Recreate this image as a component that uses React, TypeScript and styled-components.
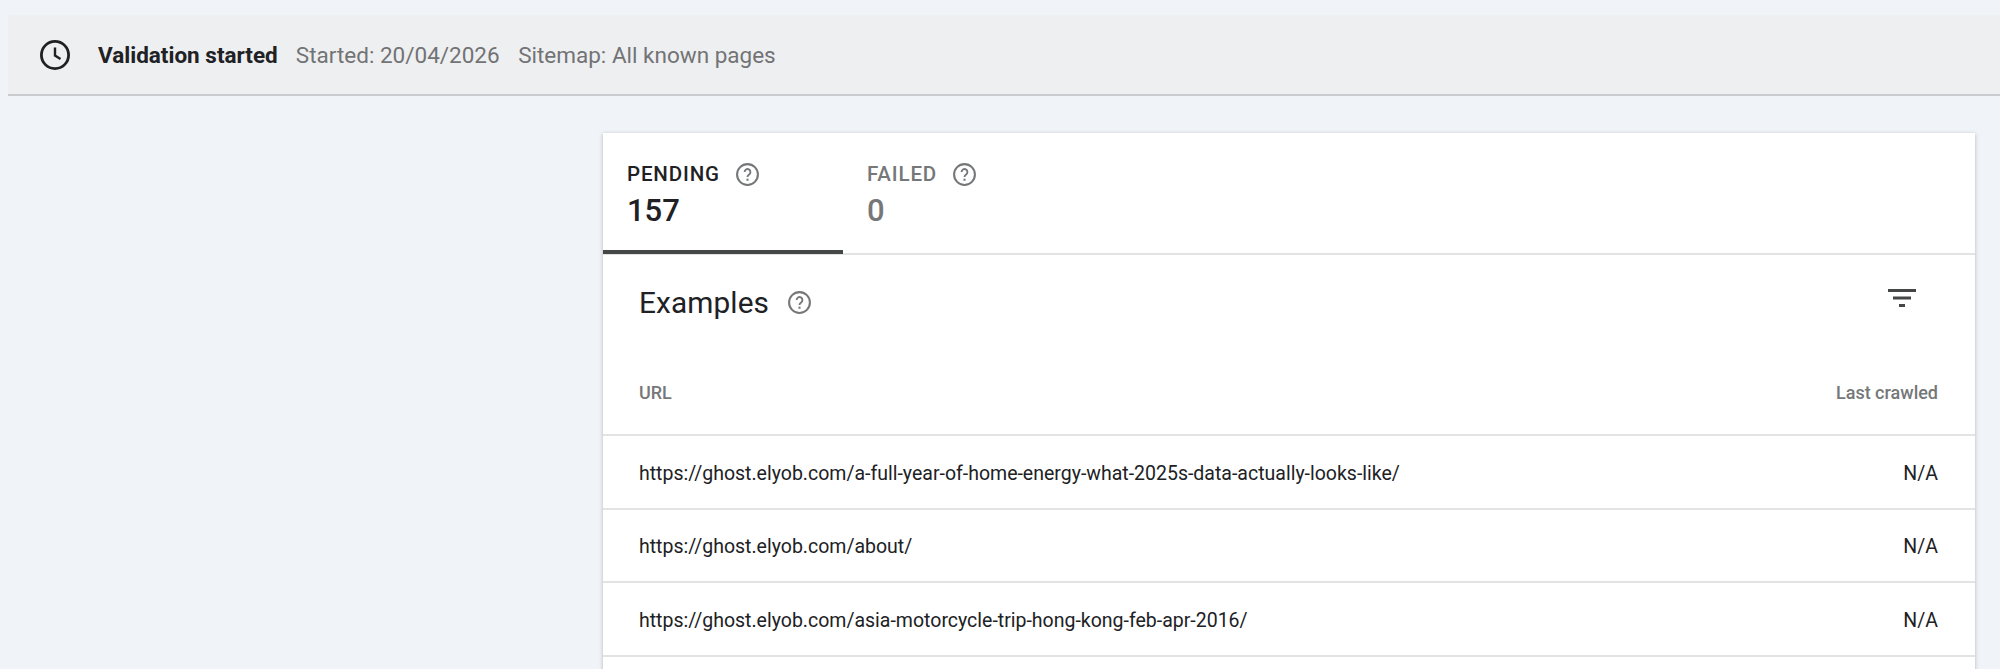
import styled, { createGlobalStyle } from "styled-components";

const GlobalStyle = createGlobalStyle`
  html, body {
    margin: 0;
    padding: 0;
    height: 669px;
    overflow: hidden;
    background: #f0f4f9;
    font-family: Roboto, "Liberation Sans", sans-serif;
    color: #202124;
  }
`;

const Page = styled.div`
  display: flex;
  flex-direction: column;
  box-sizing: border-box;
  height: 669px;
  overflow: hidden;
  padding: 15px 0 0 8px;
`;

const Banner = styled.div`
  display: flex;
  flex: none;
  align-items: center;
  height: 78px;
  padding: 1px 0 0 31px;
  background: #eeeff1;
  border-bottom: 2px solid #c9cbce;
  font-size: 22.5px;
`;

const BannerIcon = styled.svg`
  width: 32px;
  height: 32px;
  margin-right: 27px;
`;

const BannerTitle = styled.span`
  font-weight: 700;
  margin-right: 18px;
`;

const BannerMeta = styled.span`
  color: #727375;
  margin-right: 18.5px;
`;

const Layout = styled.div`
  display: flex;
  flex: 1;
  min-height: 0;
  overflow: hidden;
  justify-content: flex-end;
  padding: 37px 25px 0 0;
`;

const Card = styled.div`
  flex: none;
  width: 1372px;
  height: 600px;
  background: #fff;
  box-shadow: 0 1px 4px rgba(60, 64, 67, 0.35);
`;

const Tabs = styled.div`
  display: flex;
  box-sizing: border-box;
  height: 122px;
  border-bottom: 2px solid #e3e3e3;
`;

const Tab = styled.div<{ $active?: boolean }>`
  box-sizing: border-box;
  width: 240px;
  height: 121px;
  padding: 28px 24px 0;
  color: ${(p) => (p.$active ? "#202124" : "#757779")};
  border-bottom: 4px solid ${(p) => (p.$active ? "#444746" : "transparent")};
`;

const TabLabel = styled.div`
  display: flex;
  align-items: center;
  gap: 15px;
  height: 26px;
  font-size: 20.5px;
  font-weight: 500;
  letter-spacing: 0.85px;
`;

const TabValue = styled.div`
  font-size: 31px;
  font-weight: 500;
  line-height: 36px;
  margin-top: 6px;
`;

const HelpIcon = styled.svg`
  width: 25px;
  height: 25px;
  flex: none;
`;

const ExamplesHeader = styled.div`
  display: flex;
  align-items: center;
  justify-content: space-between;
  height: 94px;
  padding: 0 58px 0 36px;
`;

const ExamplesTitle = styled.div`
  display: flex;
  align-items: center;
  gap: 18px;
  font-size: 29.8px;
  letter-spacing: 0.1px;
`;

const FilterIcon = styled.svg`
  width: 30px;
  height: 24px;
  margin-bottom: 8px;
`;

const Row = styled.div<{ $head?: boolean }>`
  display: flex;
  align-items: center;
  justify-content: space-between;
  box-sizing: border-box;
  height: ${(p) => (p.$head ? "87px" : "73.6px")};
  padding: ${(p) => (p.$head ? "2px 37px 0 36px" : "3px 37px 0 36px")};
  border-bottom: 2px solid #e3e3e3;
  font-size: ${(p) => (p.$head ? "18px" : "19.5px")};
  font-weight: ${(p) => (p.$head ? 500 : 400)};
  color: ${(p) => (p.$head ? "#757779" : "#202124")};
`;

const rows = [
  "https://ghost.elyob.com/a-full-year-of-home-energy-what-2025s-data-actually-looks-like/",
  "https://ghost.elyob.com/about/",
  "https://ghost.elyob.com/asia-motorcycle-trip-hong-kong-feb-apr-2016/",
];

function Help() {
  return (
    <HelpIcon viewBox="0 0 24 24" fill="none">
      <circle cx="12" cy="12" r="10" stroke="#757779" strokeWidth="2" />
      <path
        d="M9.2 9.6a2.8 2.8 0 1 1 4.4 2.3c-1 .7-1.6 1.2-1.6 2.4"
        stroke="#757779"
        strokeWidth="1.8"
      />
      <rect x="11" y="16" width="2" height="2" fill="#757779" />
    </HelpIcon>
  );
}

export default function App() {
  return (
    <>
      <GlobalStyle />
      <Page>
        <Banner>
          <BannerIcon viewBox="0 0 32 32" fill="none">
            <circle cx="16" cy="16" r="13.6" stroke="#202124" strokeWidth="2.8" />
            <path d="M16 8.5V16.5L21.5 20" stroke="#202124" strokeWidth="2.4" />
          </BannerIcon>
          <BannerTitle>Validation started</BannerTitle>
          <BannerMeta>Started: 20/04/2026</BannerMeta>
          <BannerMeta>Sitemap: All known pages</BannerMeta>
        </Banner>
        <Layout>
          <Card>
            <Tabs>
              <Tab $active>
                <TabLabel>
                  PENDING
                  <Help />
                </TabLabel>
                <TabValue>157</TabValue>
              </Tab>
              <Tab>
                <TabLabel>
                  FAILED
                  <Help />
                </TabLabel>
                <TabValue>0</TabValue>
              </Tab>
            </Tabs>
            <ExamplesHeader>
              <ExamplesTitle>
                Examples
                <Help />
              </ExamplesTitle>
              <FilterIcon viewBox="0 0 30 24" fill="#444746">
                <rect x="1" y="3" width="28" height="3" />
                <rect x="6" y="10.5" width="18" height="3" />
                <rect x="12" y="18" width="6" height="3" />
              </FilterIcon>
            </ExamplesHeader>
            <Row $head>
              <span>URL</span>
              <span>Last crawled</span>
            </Row>
            {rows.map((url) => (
              <Row key={url}>
                <span>{url}</span>
                <span>N/A</span>
              </Row>
            ))}
          </Card>
        </Layout>
      </Page>
    </>
  );
}
